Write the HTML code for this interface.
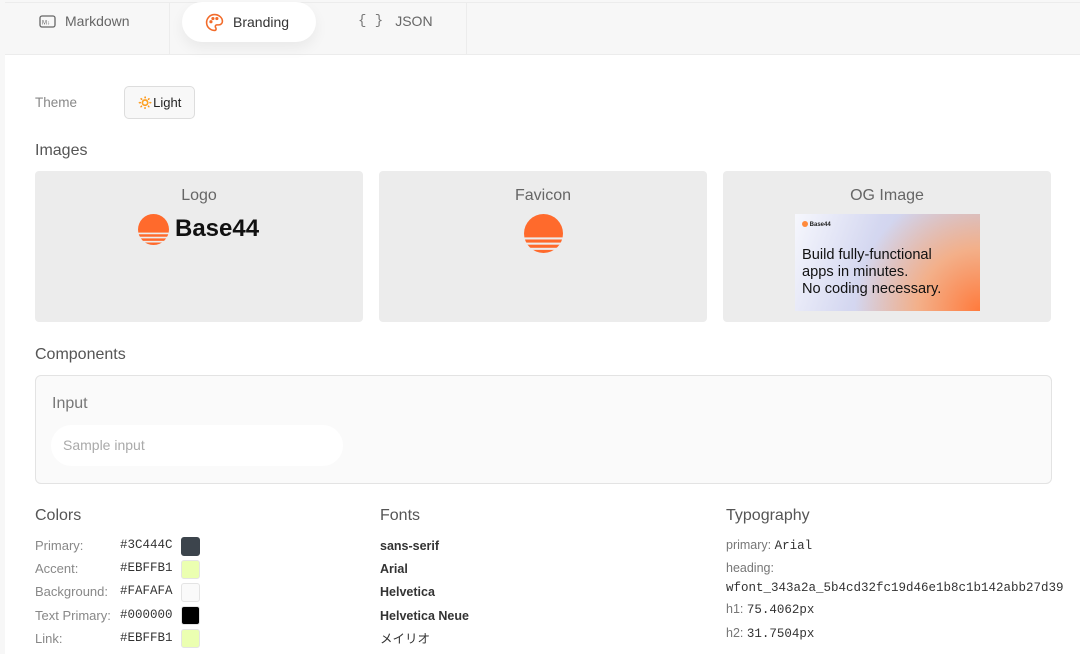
<!DOCTYPE html>
<html><head><meta charset="utf-8"><style>
*{margin:0;padding:0;box-sizing:border-box}
body{width:1080px;height:654px;overflow:hidden;background:#f7f7f7;font-family:"Liberation Sans","Noto Sans CJK JP",sans-serif;position:relative;color:#333}
.a{position:absolute}
.tabbar{left:5px;top:2px;width:1075px;height:52px;border-top:1px solid #ececec}
.tab{position:absolute;top:0;height:52px;display:flex;align-items:flex-start;padding-top:10px;font-size:14px;color:#666;border-right:1px solid #ececec}
.panel{left:5px;top:54px;width:1075px;height:600px;background:#fff;border-top:1px solid #ececec}
.card{top:171px;width:328px;height:151px;background:#ececec;border-radius:4px;text-align:center;font-size:16px;color:#666;padding-top:16px}
.h{font-size:16px;color:#555}
.lbl{font-size:13px;color:#888}
.mono{font-family:"Liberation Mono",monospace;font-size:12.5px;color:#333}
.sw{width:19px;height:19px;border-radius:3px;border:1px solid #e4e4e4}
.fn{font-size:12.5px;font-weight:bold;color:#333}
</style></head><body>
<div class="a tabbar">
 <div class="tab" style="left:0;width:165px;padding-left:34px">
  <svg width="17" height="13" viewBox="0 0 17 13" style="margin:2px 9px 0 0"><rect x="1" y="1" width="15" height="11" rx="2" fill="none" stroke="#666" stroke-width="1.3"/><text x="3" y="9.5" font-size="6" font-family="Liberation Sans" fill="#666">M↓</text></svg>Markdown</div>
 <div class="tab" style="left:165px;width:152px;border-right:none"></div>
 <div class="tab" style="left:317px;width:145px;padding-left:36px"><span style="font-family:'Liberation Mono';margin-right:12px;color:#777">{ }</span>JSON</div>
</div>
<div class="a panel"></div>
<div class="a" style="left:182px;top:2px;width:134px;height:40px;background:#fff;border-radius:20px;box-shadow:0 6px 14px rgba(0,0,0,.06);display:flex;align-items:center;padding-left:23px;font-size:14px;color:#333">
 <svg width="19" height="19" viewBox="0 0 24 24" style="margin-right:9px" fill="none" stroke="#f26b2a" stroke-width="2"><path d="M12 2a10 10 0 0 0 0 20c1.5 0 2-1 2-2 0-1.5-1-1.5-1-3 0-1 1-2 2-2h2.5A4.5 4.5 0 0 0 22 10.5C22 5.8 17.5 2 12 2z"/><circle cx="7.5" cy="11" r="1" fill="#f26b2a"/><circle cx="10" cy="7" r="1" fill="#f26b2a"/><circle cx="15" cy="7" r="1" fill="#f26b2a"/></svg>Branding</div>

<div class="a lbl" style="left:35px;top:95px;font-size:13.5px">Theme</div>
<div class="a" style="left:124px;top:86px;width:71px;height:33px;border:1px solid #ddd;border-radius:5px;background:#f8f8f8;font-size:13px;color:#222;display:flex;align-items:center;padding-left:12px">🔅Light</div>

<div class="a h" style="left:35px;top:142px">Images</div>
<div class="a card" style="left:35px">Logo</div>
<div class="a card" style="left:379px">Favicon</div>
<div class="a card" style="left:723px">OG Image</div>
<svg class="a" style="left:138px;top:214px" width="31" height="31" viewBox="0 0 30 30"><circle cx="15" cy="15" r="15" fill="#ff6a2c"/><rect x="0" y="18" width="30" height="1.6" fill="#ececec"/><rect x="0" y="22" width="30" height="1.6" fill="#ececec"/><rect x="0" y="26" width="30" height="1.6" fill="#ececec"/></svg>
<div class="a" style="left:175px;top:215px;font-size:24px;font-weight:bold;color:#111;letter-spacing:0">Base44</div>
<svg class="a" style="left:524px;top:214px" width="39" height="39" viewBox="0 0 30 30"><circle cx="15" cy="15" r="15" fill="#ff6a2c"/><rect x="0" y="18" width="30" height="1.6" fill="#ececec"/><rect x="0" y="22" width="30" height="1.6" fill="#ececec"/><rect x="0" y="26" width="30" height="1.6" fill="#ececec"/></svg>
<div class="a" style="left:795px;top:214px;width:185px;height:97px;background:radial-gradient(circle at 100% 100%,#ff7a3c 0,#f3b08a 30%,rgba(200,200,230,0) 60%),linear-gradient(110deg,#f6f7fd 0,#d4d7f0 40%,#c4c5e2 100%);padding:7px">
 <div style="font-size:6px;font-weight:bold;color:#222"><span style="display:inline-block;width:6px;height:6px;border-radius:3px;background:#ff8a3c;vertical-align:-1px"></span> Base44</div>
 <div style="font-size:14.6px;line-height:17px;color:#111;margin-top:19px;letter-spacing:0">Build fully-functional<br>apps in minutes.<br>No coding necessary.</div>
</div>

<div class="a h" style="left:35px;top:346px">Components</div>
<div class="a" style="left:35px;top:375px;width:1017px;height:109px;border:1px solid #e3e3e3;border-radius:6px;background:#fafafa"></div>
<div class="a h" style="left:52px;top:395px;color:#777">Input</div>
<div class="a" style="left:51px;top:425px;width:292px;height:41px;background:#fff;border-radius:21px;font-size:14px;color:#aaa;padding:12px 0 0 12px">Sample input</div>

<div class="a h" style="left:35px;top:507px">Colors</div>
<div class="a h" style="left:380px;top:507px">Fonts</div>
<div class="a h" style="left:726px;top:507px">Typography</div>

<div class="a lbl" style="left:35px;top:534px;line-height:23.2px">Primary:<br>Accent:<br>Background:<br>Text Primary:<br>Link:</div>
<div class="a mono" style="left:120px;top:534px;line-height:23.2px">#3C444C<br>#EBFFB1<br>#FAFAFA<br>#000000<br>#EBFFB1</div>
<div class="a sw" style="left:181px;top:537px;background:#3c444c;border-color:#3c444c"></div>
<div class="a sw" style="left:181px;top:560px;background:#ebffb1"></div>
<div class="a sw" style="left:181px;top:583px;background:#fafafa"></div>
<div class="a sw" style="left:181px;top:606px;background:#000"></div>
<div class="a sw" style="left:181px;top:629px;background:#ebffb1"></div>

<div class="a fn" style="left:380px;top:535px;line-height:23.2px">sans-serif<br>Arial<br>Helvetica<br>Helvetica Neue<br><span style="font-weight:normal">メイリオ</span></div>

<div class="a" style="left:726px;top:535px;font-size:12.5px;color:#777;line-height:21px">
 <div>primary: <span class="mono">Arial</span></div>
 <div style="margin-top:1px">heading:</div>
 <div class="mono" style="line-height:18px">wfont_343a2a_5b4cd32fc19d46e1b8c1b142abb27d39</div>
 <div style="margin-top:2px">h1: <span class="mono">75.4062px</span></div>
 <div style="margin-top:2px">h2: <span class="mono">31.7504px</span></div>
</div>
</body></html>
